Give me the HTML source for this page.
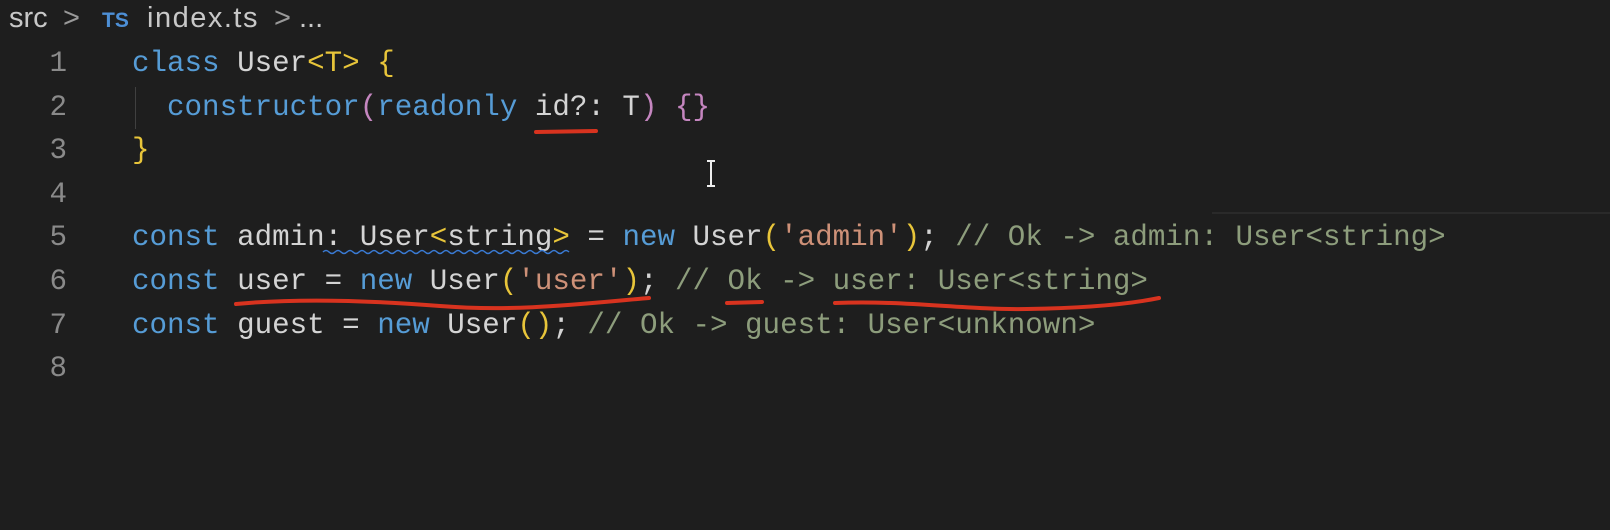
<!DOCTYPE html>
<html><head><style>
html,body{margin:0;padding:0;background:#1e1e1e;width:1610px;height:530px;overflow:hidden;position:relative}
.bc{position:absolute;top:1px;font:29px "Liberation Sans",sans-serif;color:#c8c8c8;white-space:pre;line-height:34px}
.ts{color:#4d8fd6;font-size:21px;font-weight:bold;top:4px}
.ln{position:absolute;left:0;width:67px;text-align:right;font:29.2px "Liberation Mono",monospace;color:#8a8a8a}
.code{position:absolute;left:132px;top:0;font:29.2px "Liberation Mono",monospace;color:#d4d4d4;white-space:pre}
.k{color:#569cd6}.s{color:#ce9178}.c{color:#8d9d7c}.y{color:#e8c53a}.p{color:#c586c0}
</style></head><body>
<div class="bc" style="left:9px">src</div>
<div class="bc" style="left:63px;color:#999">&gt;</div>
<div class="bc ts" style="left:102px">TS</div>
<div class="bc" style="left:147px;letter-spacing:1.5px">index.ts</div>
<div class="bc" style="left:274px;color:#999">&gt;</div>
<div class="bc" style="left:299px">...</div>
<div style="position:absolute;left:1212px;top:212px;width:398px;height:2px;background:#2a2a2a"></div>
<div style="position:absolute;left:135px;top:87px;width:1px;height:42px;background:#404040"></div>
<div class="ln" style="top:47px">1</div>
<div class="ln" style="top:91px">2</div>
<div class="ln" style="top:134px">3</div>
<div class="ln" style="top:178px">4</div>
<div class="ln" style="top:221px">5</div>
<div class="ln" style="top:265px">6</div>
<div class="ln" style="top:309px">7</div>
<div class="ln" style="top:352px">8</div>
<div class="code" style="top:47px"><span class="k">class</span> User<span class="y">&lt;T&gt;</span> <span class="y">{</span></div>
<div class="code" style="top:91px">  <span class="k">constructor</span><span class="p">(</span><span class="k">readonly</span> id?: T<span class="p">)</span> <span class="p">{}</span></div>
<div class="code" style="top:134px"><span class="y">}</span></div>
<div class="code" style="top:221px"><span class="k">const</span> admin: User<span class="y">&lt;</span>string<span class="y">&gt;</span> = <span class="k">new</span> User<span class="y">(</span><span class="s">'admin'</span><span class="y">)</span>; <span class="c">// Ok -&gt; admin: User&lt;string&gt;</span></div>
<div class="code" style="top:265px"><span class="k">const</span> user = <span class="k">new</span> User<span class="y">(</span><span class="s">'user'</span><span class="y">)</span>; <span class="c">// Ok -&gt; user: User&lt;string&gt;</span></div>
<div class="code" style="top:309px"><span class="k">const</span> guest = <span class="k">new</span> User<span class="y">()</span>; <span class="c">// Ok -&gt; guest: User&lt;unknown&gt;</span></div>
<svg width="1610" height="530" style="position:absolute;left:0;top:0">
<path d="M323 252 q3 -3 6 0 t6 0 t6 0 t6 0 t6 0 t6 0 t6 0 t6 0 t6 0 t6 0 t6 0 t6 0 t6 0 t6 0 t6 0 t6 0 t6 0 t6 0 t6 0 t6 0 t6 0 t6 0 t6 0 t6 0 t6 0 t6 0 t6 0 t6 0 t6 0 t6 0 t6 0 t6 0 t6 0 t6 0 t6 0 t6 0 t6 0 t6 0 t6 0 t6 0 t6 0" stroke="#3a7bd5" stroke-width="1.5" fill="none"/>
<path d="M536 132 L596 131" stroke="#d8331f" stroke-width="4" stroke-linecap="round" fill="none"/>
<path d="M236 304 C310 297 390 302 440 306 C515 312 580 304 649 298" stroke="#d8331f" stroke-width="4" stroke-linecap="round" fill="none"/>
<path d="M727 303 L762 302" stroke="#d8331f" stroke-width="4" stroke-linecap="round" fill="none"/>
<path d="M835 303 C905 300 965 310 1027 309 C1090 308 1130 304 1159 298" stroke="#d8331f" stroke-width="4" stroke-linecap="round" fill="none"/>
<path d="M707 161 h8 M707 186 h8 M711 161 v25" stroke="#eee" stroke-width="2" fill="none"/>
</svg>
</body></html>
